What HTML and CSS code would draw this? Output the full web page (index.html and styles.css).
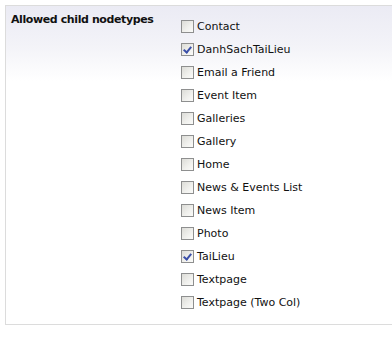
FILE: index.html
```html
<!DOCTYPE html>
<html>
<head>
<meta charset="utf-8">
<link rel="stylesheet" href="styles.css">
</head>
<body>
<div class="panel">
  <div class="label">Allowed child nodetypes</div>
  <ul class="list">
    <li><span class="cb"></span>Contact</li>
    <li><span class="cb on"></span>DanhSachTaiLieu</li>
    <li><span class="cb"></span>Email a Friend</li>
    <li><span class="cb"></span>Event Item</li>
    <li><span class="cb"></span>Galleries</li>
    <li><span class="cb"></span>Gallery</li>
    <li><span class="cb"></span>Home</li>
    <li><span class="cb"></span>News &amp; Events List</li>
    <li><span class="cb"></span>News Item</li>
    <li><span class="cb"></span>Photo</li>
    <li><span class="cb on"></span>TaiLieu</li>
    <li><span class="cb"></span>Textpage</li>
    <li><span class="cb"></span>Textpage (Two Col)</li>
  </ul>
</div>
</body>
</html>
```
FILE: styles.css
```css
html, body {
  margin: 0;
  padding: 0;
  background: #fff;
  overflow: hidden;
}
body {
  font-family: "DejaVu Sans", sans-serif;
  font-size: 11px;
  color: #111;
}
.panel {
  margin: 5px 0 0 5px;
  width: 387px;
  height: 320px;
  border: 1px solid #dcdcdc;
  border-right: none;
  background: linear-gradient(to bottom, #ebebf4 0px, #f3f3f8 40px, #ffffff 75px);
  display: flex;
  box-sizing: border-box;
}
.label {
  width: 175px;
  padding: 7px 0 0 5px;
  box-sizing: border-box;
  font-weight: bold;
  letter-spacing: -0.4px;
}
.list {
  list-style: none;
  margin: 0;
  padding: 9px 0 0 0;
}
.list li {
  display: flex;
  align-items: center;
  height: 23px;
  line-height: 23px;
}
.cb {
  width: 13px;
  height: 13px;
  box-sizing: border-box;
  border: 1px solid #8e8f8f;
  background: linear-gradient(135deg, #dcdcd7 0%, #f1f1ee 60%, #fbfbf9 100%);
  margin-right: 3px;
  position: relative;
}
.cb.on::after {
  content: "";
  position: absolute;
  left: 3px;
  top: 1px;
  width: 3px;
  height: 6px;
  border: solid #3b4fa8;
  border-width: 0 2px 2px 0;
  transform: rotate(40deg);
}
```
